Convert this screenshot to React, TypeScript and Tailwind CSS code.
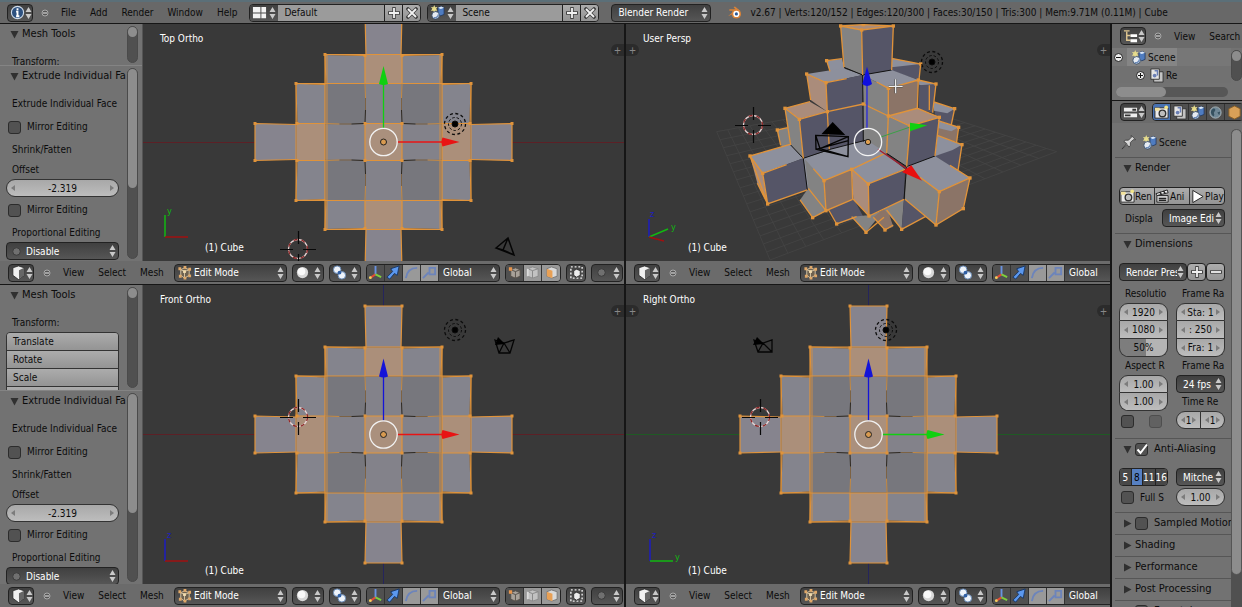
import type { ReactNode } from 'react';

const widget = 'border border-[#222] rounded-[4px]';
const darkFill = 'bg-gradient-to-b from-[#404040] to-[#565656]';
const lightFill = 'bg-gradient-to-b from-[#acacac] to-[#949494]';

function UpDown() {
  return (
    <svg width="7" height="12" viewBox="0 0 7 12" className="pointer-events-none shrink-0" aria-hidden="true">
      <path d="M3.500 0L6.500 5H.5ZM3.500 12L.5 7h6Z" fill="#c9c9c9" />
    </svg>
  );
}

function Tri({ open = true }: { open?: boolean }) {
  return (
    <svg width="9" height="9" viewBox="0 0 9 9" className="shrink-0" aria-hidden="true">
      <path d={open ? 'M.5 1h8L4.500 8.500Z' : 'M1 .5v8l7.500-4Z'} fill="#303030" />
    </svg>
  );
}

function Sign({ kind }: { kind: 'plus' | 'minus' | 'close' }) {
  const d = { plus: 'M6 1v10M1 6h10', minus: 'M1 6h10', close: 'M2 2l8 8M10 2l-8 8' }[kind];
  return (
    <svg width="12" height="12" viewBox="0 0 12 12" aria-hidden="true">
      <path d={d} stroke="#444" strokeWidth="3.500" strokeLinecap="square" />
      <path d={d} stroke="#f2f2f2" strokeWidth="1.800" />
    </svg>
  );
}

type IconName =
  | 'info' | 'layout' | 'scene' | 'cube' | 'edit' | 'sphere' | 'pivot' | 'axes' | 'arrow' | 'arc' | 'scale'
  | 'vertex' | 'edge' | 'face' | 'occlude' | 'dot' | 'tree' | 'props' | 'camera' | 'layers' | 'world'
  | 'object' | 'pin' | 'clap' | 'play' | 'blender';

function Icon({ name }: { name: IconName }) {
  const art: Record<IconName, ReactNode> = {
    info: (
      <>
        <circle cx="8" cy="8" r="6.500" fill="#2d5180" stroke="#cfdcea" strokeWidth="1.200" />
        <path d="M8 3.500v2M6.500 7H8v5M6.500 12h3.500" stroke="#fff" strokeWidth="2" fill="none" />
      </>
    ),
    layout: <path d="M1 2h8v6H1zM10 2h5v6h-5zM1 9h8v5H1zM10 9h5v5h-5z" fill="#f4f4f4" />,
    scene: (
      <>
        <path d="M4.500 0l1 2.500 2.500-.5-1.500 2L8 6 5.500 6l-1 2.500-1-2.500L1 6l1.500-2L1 2l2.500.5z" fill="#e6dc8c" />
        <path d="M8.500 3l3.500-1.500 3 1.500v7l-3.500 1.500-3-1.500z" fill="#4f7cc0" stroke="#1f365c" strokeWidth=".8" />
        <path d="M8.500 3l3.500-1.500 3 1.500-3.500 1.300z" fill="#dbe8f8" />
        <circle cx="6" cy="11" r="4" fill="#e6ebf2" stroke="#27405f" strokeWidth=".8" />
        <path d="M4 13.500a4 4 0 0 0 5-3.500" stroke="#6a8ab8" strokeWidth="1.500" fill="none" />
      </>
    ),
    cube: (
      <>
        <path d="M2 3l6-2 6 2v8l-6 4.500L2 11z" fill="#f0f0f0" stroke="#222" strokeWidth=".8" />
        <path d="M8.500 5.500L14 3v8l-5.500 4z" fill="#666" />
      </>
    ),
    edit: (
      <>
        <path d="M4 5l4-2 5 2v6l-5 3-4-3z" fill="#6f6250" stroke="#d5c6a6" />
        <path d="M4 5l4 2 5-2M8 7v7" stroke="#d5c6a6" fill="none" />
        <path d="M1.500 2.500h3v3h-3zM7 1h3v3H7zM12 3h3v3h-3zM2 10.500h3v3H2zM7 12.500h3v3H7zM12 10h3v3h-3z" fill="#e0a868" />
        <path d="M6.500 5.500h3v3h-3z" fill="#f2dcae" />
      </>
    ),
    sphere: (
      <>
        <circle cx="8" cy="8" r="6" fill="#d8d8d8" />
        <circle cx="7" cy="7" r="4" fill="#fafafa" />
      </>
    ),
    pivot: (
      <>
        <circle cx="5.500" cy="5" r="4" fill="#eef3fa" stroke="#6487b5" />
        <circle cx="10.500" cy="11" r="4" fill="#eef3fa" stroke="#6487b5" />
        <circle cx="8" cy="8" r="2" fill="#2f5fa5" />
      </>
    ),
    axes: (
      <>
        <path d="M8 1v9" stroke="#6a92e0" strokeWidth="2" />
        <path d="M8 10l-6 4" stroke="#e24a36" strokeWidth="2" />
        <path d="M8 10l6 3" stroke="#7fd03c" strokeWidth="2" />
        <circle cx="2.500" cy="13.500" r="1.500" fill="#f0d060" />
      </>
    ),
    arrow: <path d="M1 13L7 7 5 4l9-3-2 10-3-2-5 6z" fill="#5c98ee" stroke="#173868" />,
    arc: <path d="M2 14C3 7 7 3 14 3" stroke="#6c84bb" strokeWidth="2" fill="none" />,
    scale: <path d="M1 14l6-6M7 3h7v7H8V3" stroke="#6c84bb" strokeWidth="2" fill="none" />,
    vertex: (
      <>
        <path d="M4 5l5-2 5 2v7l-5 2-5-2z" fill="#a9a29a" stroke="#55504a" />
        <path d="M4 5l5 2 5-2M9 7v7" stroke="#55504a" />
        <path d="M2 2.500h3.500V6H2z" fill="#e8954c" />
      </>
    ),
    edge: (
      <>
        <path d="M3 4l5-2 6 2v8l-6 2-5-2z" fill="#c2c2c2" stroke="#8b8b8b" />
        <path d="M3 4l5 2 6-2M8 6v8" stroke="#868686" />
        <path d="M3 4v8" stroke="#ddd" strokeWidth="2" />
      </>
    ),
    face: (
      <>
        <path d="M3 4l5-2 6 2v8l-6 2-5-2z" fill="#d9d9d9" stroke="#777" />
        <path d="M3 4l6 2v8l-6-2z" fill="#e8a055" />
      </>
    ),
    occlude: (
      <>
        <rect x="2" y="2" width="12" height="12" fill="none" stroke="#eee" strokeWidth="1.500" strokeDasharray="2 2" />
        <path d="M5 6l3-1.500L12 6v5l-4 2-3-2z" fill="#ececec" stroke="#333" />
      </>
    ),
    dot: <circle cx="8" cy="8" r="4" fill="#707070" stroke="#3a3a3a" />,
    tree: (
      <>
        <path d="M4 3v9h4M4 7h4M1 2h6" stroke="#e0c791" strokeWidth="1.500" fill="none" />
        <path d="M8 5.500h7v3H8zM8 11h7v3H8z" fill="#fff" />
      </>
    ),
    props: (
      <>
        <path d="M1 3h14v4H1zM1 9h14v4H1z" fill="#eee" />
        <path d="M10 4h4v2h-4zM2 10h6v2H2z" fill="#333" />
      </>
    ),
    camera: (
      <>
        <path d="M1 3h14v11H1z" fill="#ececec" stroke="#2b2b2b" />
        <path d="M1 3h5v3H1z" fill="#f2e29c" />
        <circle cx="9" cy="9" r="3.500" fill="#bdbdbd" stroke="#333" strokeWidth="1.500" />
        <circle cx="13" cy="2.500" r="2" fill="#f3e58a" />
      </>
    ),
    layers: (
      <>
        <path d="M5 4h10v11H5z" fill="#c4c4c4" stroke="#333" />
        <path d="M2 1h9v11H2z" fill="#e5e5e5" stroke="#333" />
        <circle cx="6" cy="8" r="2" fill="#6a7fb5" />
        <path d="M6 3h3v5" stroke="#6a7fb5" fill="none" strokeWidth="1.500" />
      </>
    ),
    world: (
      <>
        <circle cx="8" cy="8" r="6" fill="#6f8796" stroke="#a9b3b8" />
        <path d="M4 5c3-3 5 0 3 2s1 3-1 5c-2-1-4-4-2-7zM10 8l3-1-1 4z" fill="#35505f" />
      </>
    ),
    object: <path d="M2 4l6-3 6 3v8l-6 3-6-3z" fill="#d8a058" stroke="#8a6028" />,
    pin: <path d="M1 15l5-6-3-2 2-1.500 3 0 3-3V0.500L15.500 5H13l-3 3v3L8.500 13 6.500 10z" fill="#d8d8d8" stroke="#333" strokeWidth=".8" />,
    clap: (
      <>
        <path d="M2 7h12v7H2z" fill="#d9d9d9" stroke="#222" />
        <path d="M1 5l12-4 1 3L2 7z" fill="#f0f0f0" stroke="#222" />
        <path d="M5 3l2 3M9 2l2 3M4 10h8M4 12h8" stroke="#222" strokeWidth="1.500" />
      </>
    ),
    play: <path d="M3 1.500L14 8 3 14.500Z" fill="#fff" stroke="#222" />,
    blender: (
      <>
        <path d="M1 12L8 6H2.500V4.500H9L7 2.500 8.500 1.500 14 6z" fill="#d88238" />
        <circle cx="10" cy="9.500" r="5" fill="#d88238" />
        <circle cx="10" cy="9.500" r="3.300" fill="#fff" />
        <circle cx="10" cy="9.500" r="1.700" fill="#2a5a9a" />
      </>
    ),
  };
  return (
    <svg width="15" height="15" viewBox="0 0 16 16" fill="none" className="shrink-0" aria-hidden="true">
      {art[name]}
    </svg>
  );
}

function IconMenu({ icon, label, className = 'w-[26px]' }: { icon: IconName; label: string; className?: string }) {
  return (
    <button type="button" aria-label={label} className={`${widget} ${darkFill} ${className} flex h-[18px] shrink-0 items-center justify-between px-0.5`}>
      <Icon name={icon} />
      <UpDown />
    </button>
  );
}

function Dropdown({ label, value, icon, className = '' }: { label: string; value: string; icon?: IconName; className?: string }) {
  return (
    <div className={`${widget} ${darkFill} ${className} flex h-[18px] min-w-0 items-center pr-0.5 pl-0.5 text-white`}>
      {icon && <Icon name={icon} />}
      <select aria-label={label} className={`h-full min-w-0 flex-1 appearance-none overflow-hidden bg-transparent ${icon ? 'pl-0.5' : 'pl-1'}`}>
        <option>{value}</option>
      </select>
      <UpDown />
    </div>
  );
}

function Collapse() {
  return (
    <button type="button" aria-label="Collapse menus" className="flex h-4 w-4 shrink-0 items-center justify-center">
      <svg width="8" height="8" viewBox="0 0 8 8">
        <circle cx="4" cy="4" r="3" fill="#555" stroke="#aaa" />
        <path d="M2 4h4" stroke="#eee" />
      </svg>
    </button>
  );
}

function Menu({ items }: { items: string[] }) {
  return (
    <nav className="flex shrink-0 gap-[14px]">
      {items.map((item) => (
        <button key={item} type="button">{item}</button>
      ))}
    </nav>
  );
}

function DataBlock({ icon, label, value }: { icon: IconName; label: string; value: string }) {
  return (
    <div className={`${widget} flex h-[18px] w-[172px] shrink-0 overflow-hidden`}>
      <button type="button" aria-label={`Browse ${label}`} className={`${darkFill} flex w-7 shrink-0 items-center justify-between px-0.5`}>
        <Icon name={icon} />
        <UpDown />
      </button>
      <input aria-label={label} defaultValue={value} className="min-w-0 flex-1 bg-[#9b9b9b] px-1.5" />
      <button type="button" aria-label={`Add ${label}`} className={`${lightFill} flex w-[18px] items-center justify-center border-l border-[#222]`}>
        <Sign kind="plus" />
      </button>
      <button type="button" aria-label={`Delete ${label}`} className={`${lightFill} flex w-[18px] items-center justify-center border-l border-[#222]`}>
        <Sign kind="close" />
      </button>
    </div>
  );
}

function InfoHeader() {
  return (
    <header className="flex h-6 shrink-0 items-center overflow-hidden border-t-2 border-b border-t-[#5b6f78] border-b-[#161616] bg-[#686868] pl-[7px] whitespace-nowrap">
      <IconMenu icon="info" label="Editor type" />
      <div className="ml-1 flex shrink-0 items-center gap-2">
        <Collapse />
        <Menu items={['File', 'Add', 'Render', 'Window', 'Help']} />
      </div>
      <div className="ml-3 flex shrink-0 items-center gap-1.5">
        <DataBlock icon="layout" label="Screen" value="Default" />
        <DataBlock icon="scene" label="Scene" value="Scene" />
      </div>
      <Dropdown label="Render engine" value="Blender Render" className="ml-3 w-[100px] shrink-0" />
      <div className="ml-4 flex items-center gap-2">
        <Icon name="blender" />
        <span>v2.67 | Verts:120/152 | Edges:120/300 | Faces:30/150 | Tris:300 | Mem:9.71M (0.11M) | Cube</span>
      </div>
    </header>
  );
}

function IconGroup({ items }: { items: { icon: IconName; label: string; look: string }[] }) {
  return (
    <>
      {items.map(({ icon, label, look }) => (
        <button key={label} type="button" aria-label={label} className={`flex w-[18px] shrink-0 items-center justify-center border-r border-[#333] last:border-r-0 ${look}`}>
          <Icon name={icon} />
        </button>
      ))}
    </>
  );
}

function ViewHeader() {
  return (
    <div className="flex h-[23px] shrink-0 items-center gap-[5px] overflow-hidden bg-[#6b6b6b] pl-2 whitespace-nowrap">
      <IconMenu icon="cube" label="Editor type" />
      <div className="flex w-[130px] shrink-0 items-center gap-2">
        <Collapse />
        <Menu items={['View', 'Select', 'Mesh']} />
      </div>
      <Dropdown label="Mode" value="Edit Mode" icon="edit" className="w-[113px] shrink-0" />
      <IconMenu icon="sphere" label="Viewport shading" className="w-8" />
      <IconMenu icon="pivot" label="Pivot point" className="w-8" />
      <div className={`${widget} ${darkFill} flex h-[18px] w-[134px] shrink-0 overflow-hidden text-white`}>
        <IconGroup
          items={[
            { icon: 'axes', label: 'Show manipulator', look: 'bg-[#505050]' },
            { icon: 'arrow', label: 'Translate manipulator', look: 'bg-[#505050]' },
            { icon: 'arc', label: 'Rotate manipulator', look: 'bg-[#999]' },
            { icon: 'scale', label: 'Scale manipulator', look: 'bg-[#999]' },
          ]}
        />
        <select aria-label="Orientation" className="min-w-0 flex-1 appearance-none bg-transparent pl-1">
          <option>Global</option>
        </select>
        <span className="flex items-center pr-0.5"><UpDown /></span>
      </div>
      <div className={`${widget} flex h-[18px] shrink-0 overflow-hidden`}>
        <IconGroup
          items={[
            { icon: 'vertex', label: 'Vertex select', look: 'bg-[#505050]' },
            { icon: 'edge', label: 'Edge select', look: 'bg-[#999]' },
            { icon: 'face', label: 'Face select', look: 'bg-[#999]' },
          ]}
        />
      </div>
      <button type="button" aria-label="Limit selection to visible" className={`${widget} ${darkFill} flex h-[18px] w-5 shrink-0 items-center justify-center`}>
        <Icon name="occlude" />
      </button>
      <IconMenu icon="dot" label="Proportional editing" className="w-8" />
      <button type="button" aria-label="Snap" className={`${widget} ${lightFill} h-[18px] w-5 shrink-0`} />
    </div>
  );
}

function PanelTitle({ children, open = true }: { children: ReactNode; open?: boolean }) {
  return (
    <h2 className="flex h-[21px] shrink-0 items-center gap-[3px] overflow-hidden pl-1 text-[11px] whitespace-nowrap">
      <Tri open={open} />
      {children}
    </h2>
  );
}

function Check({ label, hideLabel = false, checked = false, className = '' }: { label: string; hideLabel?: boolean; checked?: boolean; className?: string }) {
  return (
    <label className={`flex h-[18px] items-center gap-1.5 whitespace-nowrap ${className}`}>
      <span className="grid h-[13px] w-[13px] shrink-0 place-items-center">
        <input
          type="checkbox"
          aria-label={label}
          defaultChecked={checked}
          className="col-start-1 row-start-1 h-[13px] w-[13px] appearance-none rounded-[3px] border border-[#2c2c2c] bg-[#525252]"
        />
        {checked && (
          <svg width="13" height="13" viewBox="0 0 13 13" className="pointer-events-none col-start-1 row-start-1">
            <path d="M2.500 6.500l3 3.500L12 1.500" stroke="#fff" strokeWidth="2" fill="none" />
          </svg>
        )}
      </span>
      {!hideLabel && <span>{label}</span>}
    </label>
  );
}

function NumberBox({ label, value, className = 'rounded-full border' }: { label: string; value: string; className?: string }) {
  return (
    <div className={`flex h-[18px] min-w-0 items-center border-[#333] bg-gradient-to-b from-[#a8a8a8] to-[#bdbdbd] px-1 ${className}`}>
      <svg width="4" height="6" viewBox="0 0 4 6" className="shrink-0"><path d="M4 0v6L0 3Z" fill="#7c7c7c" /></svg>
      <input aria-label={label} defaultValue={value} className="w-full min-w-0 flex-1 bg-transparent text-center" />
      <svg width="4" height="6" viewBox="0 0 4 6" className="shrink-0"><path d="M0 0v6l4-3Z" fill="#7c7c7c" /></svg>
    </div>
  );
}

function Scrollbar({ thumb }: { thumb: string }) {
  return (
    <div className="my-0.5 flex w-[11px] shrink-0 flex-col rounded-full border border-[#4a4a4a] bg-[#505050]">
      <div className={`rounded-full bg-[#8d8d8d] ${thumb}`} />
    </div>
  );
}

function ToolShelf({ toolsHeight, tools = [] }: { toolsHeight: string; tools?: string[] }) {
  return (
    <aside className="flex w-[143px] shrink-0 flex-col border-r border-[#555] bg-[#727272] whitespace-nowrap">
      <div className={`flex shrink-0 overflow-hidden border-b border-[#848484] pl-1.5 ${toolsHeight}`}>
        <div className="min-w-0 flex-1 overflow-hidden">
          <PanelTitle>Mesh Tools</PanelTitle>
          <p className="mt-2 h-[18px] pl-1.5 leading-[18px]">Transform:</p>
          {tools.length > 0 && (
            <div className="mr-2 flex flex-col overflow-hidden rounded-t-[4px] border border-[#333]">
              {tools.map((tool) => (
                <button key={tool} type="button" className={`${lightFill} h-[18px] shrink-0 border-b border-[#333] px-1.5 text-left`}>
                  {tool}
                </button>
              ))}
              <button type="button" aria-label="Next tool" className={`${lightFill} h-[18px] shrink-0`} />
            </div>
          )}
        </div>
        <Scrollbar thumb="h-[10px]" />
        <div className="w-1 shrink-0" />
      </div>
      <div className="flex min-h-0 flex-1 overflow-hidden pl-1.5">
        <div className="min-w-0 flex-1 overflow-hidden">
          <PanelTitle>Extrude Individual Fa</PanelTitle>
          <div className="mt-2 mr-2 flex flex-col">
            <div className="flex flex-col gap-[5px] leading-[18px]">
              <p className="h-[18px] pl-1.5">Extrude Individual Face</p>
              <Check label="Mirror Editing" className="pl-0.5" />
              <p className="h-[18px] pl-1.5">Shrink/Fatten</p>
            </div>
            <p className="mt-0.5 h-[18px] pl-1.5 leading-[18px]">Offset</p>
            <NumberBox label="Offset" value="-2.319" />
            <div className="mt-1 flex flex-col gap-[5px] leading-[18px]">
              <Check label="Mirror Editing" className="pl-0.5" />
              <p className="h-[18px] pl-1.5">Proportional Editing</p>
            </div>
            <Dropdown label="Proportional Editing" value="Disable" icon="dot" />
          </div>
        </div>
        <Scrollbar thumb="h-[119px]" />
        <div className="w-1 shrink-0" />
      </div>
    </aside>
  );
}

const ORANGE = '#e0933a';

function Lamp({ x, y }: { x: number; y: number }) {
  return (
    <g transform={`translate(${x} ${y})`} fill="none" stroke="#0c0c0c">
      <circle r="3" fill="#000" />
      <circle r="6.500" strokeDasharray="2.500 2" />
      <circle r="10.500" strokeDasharray="3 2.500" strokeWidth="1.300" />
    </g>
  );
}

function Cursor3D({ x, y }: { x: number; y: number }) {
  return (
    <g transform={`translate(${x} ${y})`} fill="none">
      <circle r="9.500" stroke="#e8d6d6" strokeWidth="1.300" />
      <circle r="9.500" stroke="#8c2626" strokeWidth="1.300" strokeDasharray="4 4" />
      <path d="M-18 .5H-5M5 .5H18M.5-18V-5M.5 5V18" stroke="#080808" strokeWidth="1.200" />
    </g>
  );
}

// One silhouette of the extruded cube; it looks the same from every axis.
function OrthoMesh({ x, y, up, side }: { x: number; y: number; up: string; side: string }) {
  const quarter = [0, 90, 180, 270];
  return (
    <g transform={`translate(${x} ${y})`} fill="none">
      <rect x="-58" y="-58" width="116" height="116" fill="#77777d" />
      {quarter.map((a) => (
        <g key={a} transform={`rotate(${a})`}>
          <path d="M-18.500-128.500h37L17.500-87h-35Z" fill="#86848e" />
          <path d="M-58.500-87L-18-86v28h-39ZM58.500-87L18-86v28h39Z" fill="#84848d" />
          <path d="M-17.500-58h35v40h-35Z" fill="#83828a" />
          <path d="M-18.500-87h37v28.500h-37Z" fill="#ab8f7a" />
        </g>
      ))}
      <rect x="-18.500" y="-18.500" width="37" height="37" fill="#aa907d" />
      <path d="M-56.500-87V87M56.500-87V87" stroke={ORANGE} strokeWidth=".8" />
      {quarter.map((a) => (
        <g key={a} transform={`rotate(${a})`}>
          <path d="M-17.500-87L-18.500-128.500h37L17.500-87" stroke={ORANGE} strokeWidth="1.200" />
          <path d="M-18-86.500l-40.500-1L-57.500-58M18-86.500l40.500-1L57.500-58M-58.500-87.500H58.500" stroke={ORANGE} />
          <path d="M-87-58.500H87M-18.500-87v28.500M18.500-87v28.500" stroke={ORANGE} strokeWidth="1.200" />
          <path d="M-18.500-58.500L-18-44M18.500-58.500L18-44" stroke="#c58a43" />
          <path d="M-18-44V-32M18-44V-32" stroke="#7c6244" />
          <path d="M-18-32L-18.500-20M18-32L18.500-20" stroke="#2e2820" />
          <path d="M-18.500-18.500h37" stroke={ORANGE} strokeWidth="1.200" />
          <path
            d="M-20-130h3v3h-3zM17-130h3v3h-3zM-60-89h3v3h-3zM57-89h3v3h-3zM-20-88h3v3h-3zM17-88h3v3h-3zM-20-20h3v3h-3z"
            fill={ORANGE}
          />
        </g>
      ))}
      <path d="M0-14V-58" stroke={up} strokeWidth="1.300" />
      <path d="M-4.500-58q4.500 2 9 0L0-76Z" fill={up} />
      <path d="M14 0H59" stroke={side} strokeWidth="1.300" />
      <path d="M59-4.500q-2 4.500 0 9L76 0Z" fill={side} />
      <circle r="13.700" stroke="#f2f2f2" strokeWidth="1.300" />
      <circle r="3" fill="#d89a50" stroke="#222" />
    </g>
  );
}

function MiniAxis({ x, y, up, side, label, sideLabel }: { x: number; y: number; up: string; side: string; label: string; sideLabel?: string }) {
  return (
    <g transform={`translate(${x} ${y})`} fill="none">
      <path d="M0 0V-22" stroke={up} strokeWidth="1.500" />
      <path d="M0 0H23" stroke={side} strokeWidth="1.500" />
      <text x="2" y="-23" fill={up} fontSize="9">{label}</text>
      {sideLabel && <text x="25" y="-1" fill={side} fontSize="9">{sideLabel}</text>}
    </g>
  );
}

const FACE = {
  top: '#8d909d',
  left: '#838383',
  dark: '#555567',
  tan: '#8b7467',
  cap: '#aa8c7b',
};

// Faces of the perspective mesh, far to near.
const persp: [keyof typeof FACE, string][] = [
  ['top', '320,122 366,116 374,148 330,156'],
  ['top', '515,115 602,132 570,148 515,142'],
  ['dark', '515,142 602,132 597,180 515,152'],
  ['top', '595,180 648,192 628,200 598,196'],
  ['dark', '598,196 648,192 638,278 596,268'],
  ['dark', '640,250 704,266 694,314 648,300'],
  ['top', '642,246 704,266 682,280 642,272'],
  ['tan', '654,316 716,322 710,366 650,350'],
  ['top', '654,302 716,322 694,334 654,324'],
  ['dark', '648,376 726,374 714,452 644,408'],
  ['top', '652,346 726,374 698,390 646,408'],
  ['left', '172,330 206,322 250,415 182,376'],
  ['left', '240,540 268,500 320,572 278,593'],
  ['dark', '326,570 400,534 430,590 350,612'],
  ['left', '395,590 447,586 492,570 438,637'],
  ['tan', '460,592 500,560 520,620 495,630'],
  ['left', '492,568 552,536 545,628'],
  ['dark', '545,628 552,536 616,590'],
  ['cap', '362,18 430,14 520,18 425,30'],
  ['left', '362,18 425,30 428,165 372,142'],
  ['dark', '425,30 520,18 515,150 428,165'],
  ['top', '260,162 370,145 428,165 318,188'],
  ['cap', '260,162 318,188 322,275 272,240'],
  ['dark', '318,188 428,165 430,252 322,275'],
  ['top', '428,165 515,150 595,180 505,205'],
  ['left', '428,165 505,205 505,288 430,252'],
  ['tan', '505,205 595,180 592,265 505,288'],
  ['dark', '322,275 430,252 430,365 328,390'],
  ['left', '430,252 505,288 500,400 430,365'],
  ['cap', '195,265 270,245 322,275 238,298'],
  ['left', '195,265 238,298 250,415 212,375'],
  ['dark', '238,298 322,275 330,388 250,415'],
  ['cap', '505,288 592,265 658,292 570,318'],
  ['left', '505,288 570,318 560,440 500,400'],
  ['dark', '570,318 658,292 645,408 560,440'],
  ['top', '330,388 440,360 500,400 395,448'],
  ['top', '250,415 345,385 400,450 262,510'],
  ['top', '90,408 210,373 250,415 128,460'],
  ['cap', '90,408 128,460 143,552 112,490'],
  ['dark', '128,460 250,415 262,510 143,552'],
  ['top', '255,418 345,388 395,448 312,482'],
  ['left', '255,418 312,482 318,572 265,505'],
  ['tan', '312,482 395,448 398,538 318,572'],
  ['top', '395,448 495,400 555,448 445,492'],
  ['cap', '395,448 445,492 447,588 400,538'],
  ['dark', '445,492 555,448 552,538 447,588'],
  ['top', '558,440 645,408 750,474 658,515'],
  ['left', '558,440 658,515 648,615 555,538'],
  ['tan', '658,515 750,474 730,566 648,615'],
];

const perspOutline =
  'M362 18L425 30 520 18M362 18L430 14 520 18M362 18L372 142M425 30L428 165M520 18L515 150' +
  'M320 122L366 116M320 122L330 154M515 115L602 132 597 180M595 180L648 192 638 278M628 196V270' +
  'M260 162L318 188 322 275M260 162L272 240M318 188L380 176M505 205L595 180 592 265M505 205V288M470 186L505 205' +
  'M195 265L238 298 250 415M195 265L212 375M195 265L270 245M238 298L322 275 430 252 505 288' +
  'M322 275L328 388M505 288L592 265 658 292 570 318ZM570 318L560 440M658 292L645 408M505 288L500 400' +
  'M642 246L704 266 694 314M654 302L716 322 710 366M652 346L726 374 714 452M172 330L206 322M172 330L182 376' +
  'M90 408L128 460 143 552ZM90 408L210 373M128 460L200 434M112 490L143 552 262 510M312 482L395 448 398 538' +
  'M312 482L318 572 398 538M280 446L312 482M265 505L318 572M395 448L445 492 447 588 552 538M395 448L495 400' +
  'M445 492L555 448M400 538L447 588M240 540L278 593 318 572M326 570L350 612 410 590M395 590L438 637 492 592' +
  'M460 592L495 630 520 615M500 570L545 628 616 590M658 515L750 474 730 566 648 615ZM600 472L658 515M555 538L648 615M690 436L750 474';

const perspDots: [number, number][] = [
  [362, 18], [430, 14], [520, 18], [425, 30], [260, 162], [318, 188], [602, 132], [648, 192], [595, 180], [505, 205],
  [195, 265], [238, 298], [322, 275], [430, 252], [505, 288], [570, 318], [658, 292], [704, 266], [716, 322], [726, 374],
  [90, 408], [128, 460], [143, 552], [312, 482], [395, 448], [445, 492], [447, 588], [318, 572], [658, 515], [750, 474],
  [730, 566], [648, 615], [278, 593], [350, 612], [438, 637], [495, 630], [545, 628], [320, 122], [172, 330],
];

type Point = [number, number];

// Floor corners: left, back, right, front.
const floor: Point[] = [[-10, 335], [520, 240], [1010, 395], [150, 720]];

function between(a: Point, b: Point, t: number) {
  return `${a[0] + (b[0] - a[0]) * t} ${a[1] + (b[1] - a[1]) * t}`;
}

function PerspMesh() {
  const steps = Array.from({ length: 17 }, (_, i) => i / 16);
  const [left, back, right, front] = floor;
  return (
    <g transform="translate(720 20) scale(.3333)" fill="none">
      <g stroke="#454545" strokeWidth="2.500">
        {steps.map((t) => (
          <path key={t} d={`M${between(left, back, t)}L${between(front, right, t)}M${between(left, front, t)}L${between(back, right, t)}`} />
        ))}
      </g>
      {persp.map(([kind, points]) => (
        <polygon key={points} points={points} fill={FACE[kind]} />
      ))}
      <path
        d="M372 142L428 165 515 150M428 165L430 365M212 375L250 415 262 510M250 415L330 388 440 360M500 400L560 440 645 408M560 440L552 538"
        stroke="#111"
        strokeWidth="3"
      />
      <path d={perspOutline} stroke={ORANGE} strokeWidth="4" />
      {perspDots.map(([cx, cy]) => (
        <rect key={`${cx}-${cy}`} x={cx - 5} y={cy - 5} width="10" height="10" fill={ORANGE} />
      ))}
      <path d="M441 325V195" stroke="#2a2ad8" strokeWidth="4" />
      <path d="M427 192q14 12 29 0L441 140Z" fill="#1010e0" />
      <path d="M480 352L568 322" stroke="#3aa046" strokeWidth="3" />
      <path d="M570 308L622 316 570 334Z" fill="#10d010" />
      <path d="M474 388L560 446" stroke="#a02030" strokeWidth="4" />
      <path d="M546 456L574 436 606 482Z" fill="#e81010" />
      <circle cx="444" cy="366" r="41" stroke="#f4f4f4" strokeWidth="4" />
      <circle cx="444" cy="366" r="8" fill="#e0a050" stroke="#222" strokeWidth="3" />
      <path d="M304 343L338 306 376 345Z" fill="#000" />
      <path d="M287 346L385 350 384 410 288 388ZM287 346L300 386 385 350M300 386L384 410M288 388L385 362" stroke="#050505" strokeWidth="4" />
      <path d="M527 178v42M506 199h42" stroke="#444" strokeWidth="7" />
      <path d="M527 178v42M506 199h42" stroke="#eee" strokeWidth="4" />
    </g>
  );
}

function Viewport({ title, viewBox, children }: { title: string; viewBox: string; children: ReactNode }) {
  return (
    <section className="relative min-w-0 flex-1 overflow-hidden bg-[#393939] text-white">
      <svg viewBox={viewBox} preserveAspectRatio="xMidYMid slice" className="absolute inset-0 h-full w-full" aria-hidden="true">
        {children}
      </svg>
      <h2 className="absolute top-2 left-[17px] leading-[14px]">{title}</h2>
      <p className="absolute bottom-[6px] left-[62px] leading-[14px]">(1) Cube</p>
      <button type="button" aria-label="Show properties" className="absolute top-5 right-0 flex h-3 w-[13px] items-center justify-center rounded-l-md bg-[#2b2b2b] text-[#888]">+</button>
    </section>
  );
}

function RegionTab() {
  return (
    <button type="button" aria-label="Show tool shelf" className="absolute top-5 left-0 z-10 flex h-3 w-[13px] items-center justify-center rounded-r-md bg-[#2b2b2b] text-[#888]">+</button>
  );
}

function Outliner() {
  return (
    <section className="flex shrink-0 flex-col border-b border-[#161616]">
      <div className="flex h-6 items-center gap-1 overflow-hidden bg-[#6b6b6b] pl-2">
        <IconMenu icon="tree" label="Editor type" />
        <div className="flex items-center gap-2">
          <Collapse />
          <Menu items={['View', 'Search']} />
        </div>
      </div>
      <div className="flex h-[35px] overflow-hidden">
        <ul className="min-w-0 flex-1">
          <li className="flex h-[18px] items-center gap-1 bg-[#777] pl-0.5">
            <svg width="9" height="9" viewBox="0 0 9 9"><circle cx="4.500" cy="4.500" r="4" fill="#eee" stroke="#222" /><path d="M2 4.500h5" stroke="#111" /></svg>
            <span className="flex h-full items-center gap-0.5 bg-[#858585] pr-0.5 pl-1"><Icon name="scene" />Scene</span>
          </li>
          <li className="flex h-[18px] items-center gap-1 bg-[#717171] pl-6">
            <svg width="9" height="9" viewBox="0 0 9 9"><circle cx="4.500" cy="4.500" r="4" fill="#eee" stroke="#222" /><path d="M2 4.500h5M4.500 2v5" stroke="#111" /></svg>
            <span className="flex items-center gap-0.5"><Icon name="layers" />Re</span>
          </li>
        </ul>
        <Scrollbar thumb="h-[10px]" />
      </div>
      <div className="flex h-[17px] items-center pr-[14px] pl-1">
        <div className="h-[10px] flex-1 rounded-full bg-[#575757]">
          <div className="h-full w-[50px] rounded-full bg-[#8d8d8d]" />
        </div>
      </div>
    </section>
  );
}

function SubLabel({ children }: { children: ReactNode }) {
  return <p className="h-[18px] pl-1.5 leading-[18px]">{children}</p>;
}

const stackTop = 'rounded-t-[9px] border';
const stackMid = 'border-x border-b';
const stackEnd = 'rounded-b-[9px] border-x border-b';
const panel = 'shrink-0 border-t border-[#565656] pl-1';
const panelBody = 'mt-2 pr-1.5';

function Properties() {
  return (
    <section className="flex min-h-0 flex-1 flex-col">
      <div className="flex h-[22px] shrink-0 items-center gap-1.5 overflow-hidden bg-[#6b6b6b] pl-2">
        <IconMenu icon="props" label="Editor type" />
        <div className={`${widget} flex h-[18px] shrink-0 overflow-hidden`}>
          <IconGroup
            items={[
              { icon: 'camera', label: 'Render', look: 'bg-[#4772b3]' },
              { icon: 'layers', label: 'Render layers', look: 'bg-[#505050]' },
              { icon: 'scene', label: 'Scene', look: 'bg-[#505050]' },
              { icon: 'world', label: 'World', look: 'bg-[#505050]' },
              { icon: 'object', label: 'Object', look: 'bg-[#505050]' },
            ]}
          />
        </div>
      </div>
      <div className="flex min-h-0 flex-1 overflow-hidden pl-[3px]">
        <div className="flex min-w-0 flex-1 flex-col overflow-hidden">
          <div className="flex h-[34px] shrink-0 items-center gap-1 pt-1 pl-1.5">
            <Icon name="pin" />
            <span className="flex items-center gap-0.5 pl-0.5"><Icon name="scene" />Scene</span>
          </div>
          <div className={`${panel} pb-1.5`}>
            <PanelTitle>Render</PanelTitle>
            <div className={panelBody}>
              <div className={`${widget} ${lightFill} flex h-[18px] overflow-hidden whitespace-nowrap`}>
                <button type="button" className="flex min-w-0 flex-1 items-center overflow-hidden"><Icon name="camera" />Ren</button>
                <button type="button" className="flex min-w-0 flex-1 items-center overflow-hidden border-x border-[#333]"><Icon name="clap" />Ani</button>
                <button type="button" className="flex min-w-0 flex-1 items-center overflow-hidden"><Icon name="play" />Play</button>
              </div>
              <div className="mt-1 flex items-center justify-between pl-1.5">
                <span>Displa</span>
                <Dropdown label="Display" value="Image Edi" className="w-[63px]" />
              </div>
            </div>
          </div>
          <div className={`${panel} pb-2`}>
            <PanelTitle>Dimensions</PanelTitle>
            <div className={panelBody}>
              <div className="flex">
                <Dropdown label="Render presets" value="Render Pres" className="flex-1" />
                <button type="button" aria-label="Add preset" className={`${widget} ${lightFill} flex h-[18px] w-[19px] items-center justify-center`}><Sign kind="plus" /></button>
                <button type="button" aria-label="Remove preset" className={`${widget} ${lightFill} flex h-[18px] w-[19px] items-center justify-center`}><Sign kind="minus" /></button>
              </div>
              <div className="mt-1 grid grid-cols-2 gap-x-2 whitespace-nowrap">
                <div className="min-w-0">
                  <SubLabel>Resolutio</SubLabel>
                  <NumberBox label="Resolution X" value="1920" className={stackTop} />
                  <NumberBox label="Resolution Y" value="1080" className={stackMid} />
                  <div className="flex h-[18px] rounded-b-[9px] border-x border-b border-[#333] bg-gradient-to-r from-[#7d7d7d] from-55% to-[#b4b4b4] to-55%">
                    <input aria-label="Resolution percentage" defaultValue="50%" className="w-full min-w-0 bg-transparent text-center" />
                  </div>
                  <SubLabel>Aspect R</SubLabel>
                  <NumberBox label="Aspect X" value="1.00" className={stackTop} />
                  <NumberBox label="Aspect Y" value="1.00" className={stackEnd} />
                  <div className="flex gap-[15px] pt-px pl-0.5">
                    <Check label="Border" hideLabel />
                    <Check label="Crop" hideLabel className="opacity-50" />
                  </div>
                </div>
                <div className="min-w-0">
                  <SubLabel>Frame Ra</SubLabel>
                  <NumberBox label="Frame start" value="Sta: 1" className={stackTop} />
                  <NumberBox label="Frame end" value=": 250" className={stackMid} />
                  <NumberBox label="Frame step" value="Fra: 1" className={stackEnd} />
                  <SubLabel>Frame Ra</SubLabel>
                  <Dropdown label="Frame rate" value="24 fps" />
                  <SubLabel>Time Re</SubLabel>
                  <div className="flex">
                    <NumberBox label="Remap old" value="1" className="flex-1 rounded-l-full border" />
                    <NumberBox label="Remap new" value="1" className="flex-1 rounded-r-full border-y border-r" />
                  </div>
                </div>
              </div>
            </div>
          </div>
          <div className={`${panel} pb-1.5`}>
            <PanelTitle><Check label="Anti-Aliasing" checked /></PanelTitle>
            <div className={`${panelBody} grid grid-cols-2 gap-x-2 gap-y-0.5 whitespace-nowrap`}>
              <div className={`${widget} flex h-[18px] overflow-hidden text-white`}>
                {['5', '8', '11', '16'].map((n) => (
                  <button key={n} type="button" className={`flex-1 border-r border-[#222] last:border-r-0 ${n === '8' ? 'bg-[#5680c2] text-black' : 'bg-[#484848]'}`}>{n}</button>
                ))}
              </div>
              <Dropdown label="Filter" value="Mitche" />
              <Check label="Full S" className="pl-0.5" />
              <NumberBox label="Filter size" value="1.00" />
            </div>
          </div>
          <div className={panel}>
            <PanelTitle open={false}><Check label="Sampled Motion" /></PanelTitle>
          </div>
          {['Shading', 'Performance', 'Post Processing'].map((name) => (
            <div key={name} className={panel}>
              <PanelTitle open={false}>{name}</PanelTitle>
            </div>
          ))}
          <div className={panel}>
            <PanelTitle open={false}><Check label="Freestyle" /></PanelTitle>
          </div>
        </div>
        <div className="mt-1.5 flex w-[11px] shrink-0 flex-col rounded-t-full bg-[#505050]">
          <div className="h-[446px] rounded-full border border-[#555] bg-[#8d8d8d]" />
        </div>
      </div>
    </section>
  );
}

const areaRow = 'flex min-h-0 flex-1';

export default function App() {
  return (
    <div className="flex h-screen flex-col overflow-hidden bg-[#161616] font-['DejaVu_Sans_Condensed','DejaVu_Sans',sans-serif] text-[10px] text-[#0c0c0c]">
      <InfoHeader />
      <div className="flex min-h-0 flex-1 gap-0.5">
        <div className="flex min-w-0 flex-[624] flex-col gap-px">
          <div className="flex min-h-0 flex-[260] flex-col">
            <div className={areaRow}>
              <ToolShelf toolsHeight="h-[42px]" />
              <Viewport title="Top Ortho" viewBox="143 24 481 237">
                <path d="M143 142.500H625" stroke="#5c2026" />
                <OrthoMesh x={383.5} y={142} up="#10d010" side="#e81414" />
                <Lamp x={455} y={124} />
                <Cursor3D x={298} y={249} />
                <path d="M496 248L508 238 514 255ZM508 238L503 250 514 255M496 248L503 250" fill="none" stroke="#050505" strokeWidth="1.500" />
                <MiniAxis x={165} y={237} up="#12b812" side="#a01010" label="y" />
              </Viewport>
            </div>
            <ViewHeader />
          </div>
          <div className="flex min-h-0 flex-[322] flex-col">
            <div className={areaRow}>
              <ToolShelf toolsHeight="h-[106px]" tools={['Translate', 'Rotate', 'Scale']} />
              <Viewport title="Front Ortho" viewBox="143 285 481 299">
                <path d="M143 434.500H625" stroke="#5c2026" />
                <path d="M383.500 285V584" stroke="#25255c" />
                <OrthoMesh x={383.5} y={434.5} up="#1414d8" side="#e81414" />
                <Lamp x={455} y={330} />
                <Cursor3D x={298} y={417} />
                <path d="M495 340L504 343 514 340 510 353H499ZM499 353L504 343 510 353" fill="none" stroke="#050505" strokeWidth="1.300" />
                <path d="M495 345L498 337 505 344Z" fill="#000" />
                <MiniAxis x={165} y={561} up="#1c1cc0" side="#a01010" label="z" />
              </Viewport>
            </div>
            <ViewHeader />
          </div>
        </div>
        <div className="flex min-w-0 flex-[484] flex-col gap-px">
          <div className="flex min-h-0 flex-[260] flex-col">
            <div className={`${areaRow} relative`}>
              <RegionTab />
              <Viewport title="User Persp" viewBox="626 24 484 237">
                <PerspMesh />
                <Lamp x={932} y={62} />
                <Cursor3D x={753} y={125} />
                <path d="M649 237V219" stroke="#1c1cc0" strokeWidth="1.500" />
                <path d="M649 237L668 229" stroke="#12b812" strokeWidth="1.500" />
                <path d="M649 237L664 241" stroke="#a01010" strokeWidth="1.500" />
                <text x="650" y="217" fontSize="9" fill="#1c1cc0">z</text>
                <text x="671" y="230" fontSize="9" fill="#12b812">y</text>
              </Viewport>
            </div>
            <ViewHeader />
          </div>
          <div className="flex min-h-0 flex-[322] flex-col">
            <div className={`${areaRow} relative`}>
              <RegionTab />
              <Viewport title="Right Ortho" viewBox="626 285 484 299">
                <path d="M626 434.500H1111" stroke="#1f5a24" />
                <path d="M868.500 285V584" stroke="#25255c" />
                <OrthoMesh x={868.5} y={434.5} up="#1414d8" side="#10d010" />
                <Lamp x={886} y={330} />
                <Cursor3D x={760} y={417} />
                <path d="M754 340L763 343 772 340V352H758ZM758 352L763 343 772 352" fill="none" stroke="#050505" strokeWidth="1.300" />
                <path d="M753 345L757 337 764 344Z" fill="#000" />
                <MiniAxis x={650} y={561} up="#1c1cc0" side="#12b812" label="z" sideLabel="y" />
              </Viewport>
            </div>
            <ViewHeader />
          </div>
        </div>
        <aside className="flex w-[130px] shrink-0 flex-col bg-[#727272]">
          <Outliner />
          <Properties />
        </aside>
      </div>
    </div>
  );
}
